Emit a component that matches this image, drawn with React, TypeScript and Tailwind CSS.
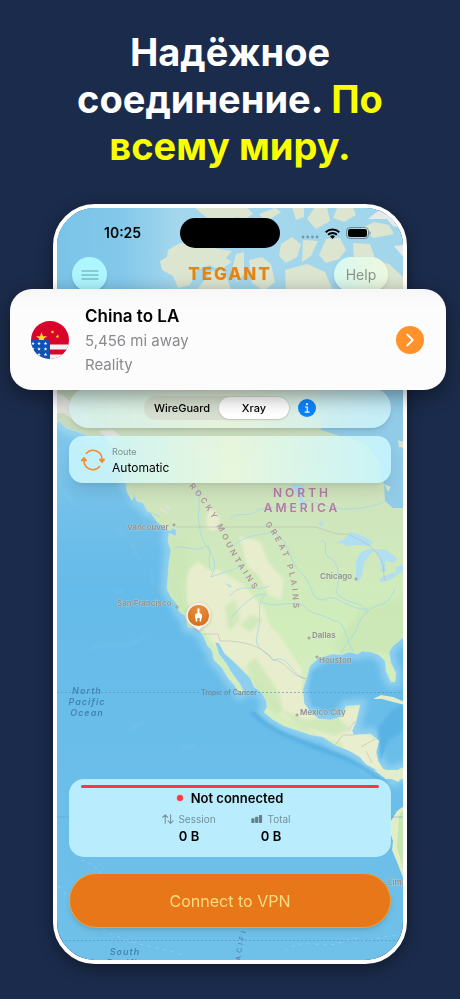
import React, { useState } from 'react';
import { ChevronRight } from 'lucide-react';

interface City {
  name: string;
  x: number;
  y: number;
  dot: [number, number];
}

const cities: City[] = [
  { name: 'Vancouver', x: 127, y: 530, dot: [174, 525] },
  { name: 'San Francisco', x: 117, y: 606, dot: [177, 607] },
  { name: 'Chicago', x: 320, y: 579, dot: [356, 579] },
  { name: 'Dallas', x: 312, y: 638, dot: [309, 638] },
  { name: 'Houston', x: 319, y: 663, dot: [317, 657] },
  { name: 'Mexico City', x: 300, y: 715, dot: [297, 715] },
  { name: 'Lima', x: 388, y: 885, dot: [420, 885] },
];

const MAINLAND =
  'M50 384L50 421 60 422 66 428 78 432 92 437 104 435 111 442 118 458 123 476 127 486 133 493 137 501 143 503 147 511 158 515 164 523 170 527 176 530 176 536 169 533 168 541 171 551 169 562 168 576 167 589 171 597 177 604 179 611 185 616 188 627 197 629 203 635 207 645 212 651 214 660 222 668 228 678 235 686 240 694 244 692 240 684 232 673 226 663 219 654 215 642 219 643 225 654 233 661 243 671 250 678 254 687 261 692 266 700 267 707 264 712 272 719 284 726 296 730 311 735 323 737 335 745 350 751 360 757 366 764 375 769 386 774 394 780 398 776 410 777 410 768 401 768 393 773 383 769 378 761 376 752 379 741 371 734 354 735 352 731 356 722 360 705 346 706 341 717 330 720 319 719 311 713 304 703 303 689 307 677 310 666 319 658 333 654 341 655 349 652 358 654 362 651 371 652 379 655 385 661 386 671 391 682 395 682 396 673 391 663 389 652 393 646 401 639 410 633 410 384Z';

const rivers = [
  'M174 548C185 544 198 554 205 546C216 547 204 560 212 571',
  'M197 486C203 506 195 515 200 526C198 546 224 555 211 577C225 572 235 570 245 564',
  'M230 519C240 510 248 519 258 510C278 504 293 512 307 500C332 509 352 514 387 501',
  'M231 548C244 534 260 536 272 532C293 541 287 563 303 574C315 590 310 600 325 600C334 591 348 611 368 609',
  'M321 541C331 540 321 551 328 557C342 562 339 584 336 592C347 607 362 599 367 612C356 622 360 628 348 642C344 649 340 653 341 655',
  'M231 618C244 604 252 594 266 594C254 605 264 610 257 635C253 649 267 651 273 660C291 654 289 676 307 679',
  'M262 602C276 609 289 600 303 605C311 616 322 613 334 621C345 620 345 638 353 651',
  'M230 596C241 581 256 593 269 586M367 612C378 601 388 609 395 588',
];

const borders = [
  'M176 527H316C330 532 337 535 347 534C362 540 373 547 377 554C387 565 382 574 385 581',
  'M203 634H218L220 641H230C250 643 263 647 273 660C286 660 289 676 307 679',
  'M348 731L354 722H370M335 745L343 735H354M361 747L375 739M372 763L366 751',
];

const TegantMap = () => (
  <svg
    viewBox="57 208 346 752"
    preserveAspectRatio="xMidYMid slice"
    className="absolute inset-0 h-full w-full"
    aria-hidden="true"
  >
    <defs>
      <linearGradient id="sea" x1="0" y1="0" x2="0" y2="1">
        <stop offset="0" stopColor="#83c8ea" />
        <stop offset="0.3" stopColor="#80c6ea" />
        <stop offset="0.5" stopColor="#65bbe9" />
        <stop offset="1" stopColor="#70c1e9" />
      </linearGradient>
      <linearGradient id="arctic" x1="0" y1="0" x2="1" y2="0">
        <stop offset="0" stopColor="#79c3e8" />
        <stop offset="0.2" stopColor="#83c8ea" />
        <stop offset="0.35" stopColor="#a4d7ed" />
        <stop offset="1" stopColor="#a2d6eb" />
      </linearGradient>
      <linearGradient id="land" x1="0" y1="0" x2="0" y2="1">
        <stop offset="0" stopColor="#c3d4bd" />
        <stop offset="0.3" stopColor="#cfe5bd" />
        <stop offset="0.6" stopColor="#d0edbb" />
        <stop offset="1" stopColor="#dcedc0" />
      </linearGradient>
      <radialGradient id="pin" cx="0.5" cy="0.2" r="0.8">
        <stop offset="0" stopColor="#e9903f" />
        <stop offset="1" stopColor="#d3701f" />
      </radialGradient>
      <filter id="haze" x="-20%" y="-20%" width="140%" height="140%">
        <feGaussianBlur stdDeviation="3" />
      </filter>
      <filter id="soft" x="-20%" y="-20%" width="140%" height="140%">
        <feGaussianBlur stdDeviation="1.5" />
      </filter>
      <clipPath id="landClip">
        <path d={MAINLAND} />
      </clipPath>
      <path id="rockies" d="M189 486C207 508 213 519 221 534C233 560 242 572 262 602" />
      <path id="plains" d="M265 524C277 540 286 558 290 578C293 590 293 602 294 622" />
      <path id="pacific" d="M240 968C241 950 244 935 251 918" />
    </defs>

    <rect x="50" y="200" width="360" height="770" fill="url(#sea)" />
    <rect x="50" y="200" width="360" height="190" fill="url(#arctic)" />
    <g fill="#dce5d0">
      <path d="M168 250L180 243 202 246 232 251 226 258 232 262 220 270 209 265 197 270 190 285 178 288 173 276 162 270 160 261 167 257Z" />
      <path d="M194 207L247 207 253 214 245 219 236 217 225 222 207 218Z" />
      <path d="M259 214L275 208 281 212 266 222Z" />
      <path d="M292 207H304V217L296 220Z" />
      <path d="M315 207L327 207 330 221 316 229 307 219Z" />
      <path d="M337 208L353 207 356 215 344 222 333 218Z" />
      <path d="M360 229L374 222 389 225 394 234 374 238Z" />
      <path d="M281 244L292 237 301 244 297 257 286 263 279 256Z" />
      <path d="M303 240L318 241 311 256 302 262Z" />
      <path d="M326 239L340 238 346 250 339 259 326 263 319 255Z" />
      <path d="M236 254L244 252 244 274 237 282 232 270Z" />
      <path d="M249 260L262 257 271 264 275 282 264 291 252 283Z" />
      <path d="M353 243L370 244 376 261 389 264 404 278V292H378L370 274 354 260Z" />
      <path d="M198 288L212 271 224 270 232 292H199Z" />
      <path d="M285 270L307 264 325 272 333 291H286Z" />
    </g>
    <path d="M368 219L383 207H410V231L393 226 387 219ZM394 246L404 245V258Z" fill="#e7e9e8" />

    <path d={MAINLAND} fill="none" stroke="#a8dcf3" strokeWidth="12" opacity="0.6" filter="url(#haze)" />
    <path d="M252 712C278 739 315 744 349 760C365 768 374 774 386 784" fill="none" stroke="#49a9df" strokeWidth="4" opacity="0.7" filter="url(#soft)" />
    <path d="M311 672C326 662 351 661 367 666L370 685 350 690 335 704 312 707 309 690Z" fill="#69bce8" filter="url(#soft)" />
    <path d="M378 728L392 710 410 701V727L389 740 380 762Z" fill="#58b2e3" filter="url(#soft)" />
    <path d={MAINLAND} fill="url(#land)" stroke="#bce5ef" strokeWidth="0.5" />

    <g clipPath="url(#landClip)">
      <g fill="#eceed0" opacity="0.85" filter="url(#soft)">
        <path d="M187 570L199 562 207 569 219 570 230 577 244 585 253 596 263 607 269 624 281 637 290 651 302 670 302 692 312 713 335 721 346 743 322 737 304 726 282 716 274 699 257 681 241 666 218 650 208 636 199 624 187 603Z" />
        <path d="M239 536L260 541 269 563 284 579 281 600 268 594 259 576 247 566Z" />
        <path d="M207 513L213 508 220 519 215 532 206 528Z" />
        <path d="M337 714L361 705 354 728 380 741 378 755 410 780 396 786 366 765 343 750Z" />
      </g>
      <g fill="#cbe7b6" opacity="0.8" filter="url(#soft)">
        <path d="M168 537L184 540 190 570 181 584 187 605 193 620 178 610 165 585Z" />
        <path d="M246 665L256 658 270 679 279 693 283 711 275 714 258 693Z" />
        <path d="M225 607L235 600 240 619 229 631ZM252 615L262 620 250 632 240 625Z" />
        <path d="M334 646L361 608 410 596 410 635 391 652 343 655Z" />
        <path d="M276 707L305 720 337 716 350 729 336 736 301 727Z" />
      </g>
      <g fill="#e2e1df" opacity="0.9">
        <path d="M50 390L64 396 76 407 89 415 95 427 78 424 64 413 50 414Z" />
        <path d="M99 431L113 430 123 438 112 444ZM158 505L164 510 171 514 163 512ZM165 504L172 509 168 510Z" />
      </g>
      <path d="M410 380H319L321 430 343 437 367 446 378 462 384 484 385 501 393 508 410 508Z" fill="#91cbe8" />
      <path d="M325 437L345 436 368 446 379 462 383 484 340 484Z" fill="#cfe3c4" />
      <path d="M398 440L404 442V448L399 447ZM384 484L391 487 388 492Z" fill="#d9e3c8" />
      <g fill="#b0dff2">
        <path d="M334 544L344 539 351 532 363 536 373 542 370 546 355 545 347 546 341 543Z" />
        <path d="M356 577L356 562 360 553 368 549 377 550 370 554 364 563 362 576 358 582Z" />
        <path d="M374 549L386 550 397 558 394 563 385 560 386 572 381 572 380 559Z" />
        <path d="M379 579L391 573 401 572 390 580 381 582Z" />
        <path d="M395 568L410 561V569L397 573Z" />
        <path d="M291 484L304 485 302 497 307 507 302 506 297 494 293 490ZM318 523L324 521 322 527Z" />
        <path d="M225 583L232 586 230 588Z" />
      </g>
      <g fill="none" stroke="#a7d7ea" strokeWidth="0.8">
        {rivers.map((d) => (
          <path key={d} d={d} />
        ))}
      </g>
      <g fill="none" stroke="#b9adb9" strokeWidth="0.7" opacity="0.7">
        {borders.map((d) => (
          <path key={d} d={d} />
        ))}
      </g>
    </g>

    <path d="M126 485L131 488 134 497 132 501 127 492ZM150 512L163 519 173 530 169 531 157 522Z" fill="#cfe5bc" />
    <path d="M373 699L381 695 393 697 405 702 405 705 393 702 382 699Z" fill="#e3edc8" />
    <path d="M374 770L383 771 392 776 396 773 408 776V779H386Z" fill="#e3edc8" />
    <path d="M378 770L404 770V776L398 782Z" fill="#e3edc8" />
    <path d="M404 806L397 811 391 821 390 832 393 841 392 850 397 862 404 880Z" fill="#e0edc5" />
    <path d="M399 816L404 808V872L397 848Z" fill="#c6e6b4" />

    <g stroke="#b9e3f4" strokeWidth="1" fill="none" opacity="0.3" filter="url(#soft)">
      <path d="M64 490L75 506M118 527L124 535M131 543L140 560M151 570L153 586M114 592L124 591" />
      <path d="M90 650C111 637 128 653 144 636M129 730L145 722M182 748L195 745" />
    </g>
    <g stroke="#b9e3f4" strokeWidth="1" fill="none" opacity="0.4">
      <path d="M58 886C77 902 71 919 103 929C137 949 163 946 184 956M285 951C306 934 327 955 352 937C370 947 383 932 402 936" strokeDasharray="3 5" />
      <path d="M82 860C98 864 99 877 119 885" strokeDasharray="3 4" />
    </g>
    <g stroke="#5494b8" strokeWidth="1" opacity="0.65">
      <path d="M57 692.500H199M258 692.500H404" strokeDasharray="2 2" />
      <path d="M57 817H404" opacity="0.6" />
      <path d="M57 940.500H404" strokeDasharray="2 2" />
    </g>

    <g className="font-[Inter,sans-serif]">
      <g fill="#b57aa6" className="text-[12px] font-semibold tracking-[3px]" textAnchor="middle">
        <text x="302" y="497">NORTH</text>
        <text x="302" y="512">AMERICA</text>
      </g>
      <g fill="#b0939b" className="text-[8px] font-semibold tracking-[3px]">
        <text>
          <textPath href="#rockies">ROCKY MOUNTAINS</textPath>
        </text>
        <text>
          <textPath href="#plains">GREAT PLAINS</textPath>
        </text>
      </g>
      <g fill="#4385b4" className="text-[9px] font-semibold italic tracking-[1px]" textAnchor="middle">
        <text x="87" y="694">North</text>
        <text x="87" y="705">Pacific</text>
        <text x="87" y="716">Ocean</text>
        <text x="125" y="955">South</text>
        <text x="125" y="966">Pacific</text>
      </g>
      <text fill="#4f88ad" className="text-[7px] font-medium tracking-[3px]">
        <textPath href="#pacific">PACIFIC</textPath>
      </text>
      <text x="201" y="695" fill="#74868c" className="text-[7px] font-medium">
        Tropic of Cancer
      </text>
      <g className="text-[8px] font-semibold" fill="#8f9192">
        {cities.map(({ name, x, y, dot }) => (
          <g key={name}>
            <circle cx={dot[0]} cy={dot[1]} r="1.1" fill="#d5d3d0" stroke="#8f8a8c" strokeWidth="0.8" />
            <text x={x} y={y} stroke="#e5ead8" strokeWidth="1" strokeOpacity="0.4" paintOrder="stroke">
              {name}
            </text>
          </g>
        ))}
      </g>
    </g>

    <path d="M198.500 632L193 627.500A12.500 12.500 0 1 1 204 627.500Z" fill="#7a6a60" opacity="0.3" filter="url(#soft)" />
    <path d="M198.500 630.500L194.500 627A12.300 12.300 0 1 1 202.500 627Z" fill="#f6f2ee" />
    <circle cx="198.500" cy="615.500" r="10.600" fill="url(#pin)" />
    <path d="M197.500 608.500H199.500V613L202 614.500V618.500H201.200V621.500H199.700V618H197.300V621.500H195.800V618.500H195V614.500L197.500 613Z" fill="#fff" />
  </svg>
);

const FlagIcon = () => (
  <svg viewBox="0 0 38 38" className="h-[38px] w-[38px] shrink-0" role="img" aria-label="China and United States">
    <defs>
      <clipPath id="flagClip">
        <circle cx="19" cy="19" r="19" />
      </clipPath>
      <path id="star" d="M0-1L.26-.31 .95-.31 .38.12 .59.81 0 .4-.59.81-.38.12-.95-.31-.26-.31Z" />
    </defs>
    <g clipPath="url(#flagClip)">
      <rect width="38" height="38" fill="#d9042b" />
      <g fill="#ffda2c">
        <use href="#star" transform="translate(10.500 17) scale(5.800)" />
        <use href="#star" transform="translate(21.500 11) scale(2.100) rotate(20)" />
        <use href="#star" transform="translate(26.500 15.500) scale(2.100) rotate(-10)" />
      </g>
      <rect y="23.500" width="38" height="5" fill="#f4f1f2" />
      <rect y="33.500" width="38" height="5" fill="#f4f1f2" />
      <rect y="19" width="19" height="19" fill="#0b52b4" />
      <g fill="#fff">
        {[22.5, 28, 33.5].map((y) =>
          [2, 8, 14.5].map((x) => (
            <use key={`${x}-${y}`} href="#star" transform={`translate(${x} ${y}) scale(2)`} />
          ))
        )}
      </g>
    </g>
  </svg>
);

const StatusBar = () => (
  <div className="grid grid-cols-[1fr_100px_1fr] items-center pt-2.5">
    <span className="pl-[47px] text-sm font-semibold text-black">10:25</span>
    <div className="h-[30px] rounded-full bg-black" />
    <div className="flex items-center justify-end gap-1.5 pr-8">
      <svg viewBox="0 0 18 14" className="h-3.5 w-[18px]" aria-hidden="true">
        {[2, 6.7, 11.4, 16].map((x) => (
          <circle key={x} cx={x} cy="11" r="1.4" fill="#719bad" />
        ))}
      </svg>
      <svg viewBox="0 0 15 11" className="h-[11px] w-[15px]" aria-hidden="true">
        <g fill="none" stroke="#000" strokeWidth="1.900">
          <path d="M.7 4.200A9.800 9.800 0 0 1 14.300 4.200" />
          <path d="M3.100 6.800A6.300 6.300 0 0 1 11.900 6.800" />
        </g>
        <path d="M7.500 11L5.100 8.500A3.500 3.500 0 0 1 9.900 8.500Z" />
      </svg>
      <svg viewBox="0 0 25 12" className="h-3 w-[25px]" aria-hidden="true">
        <rect x=".5" y=".5" width="22" height="11" rx="3.600" fill="none" stroke="#6f8c95" />
        <rect x="2" y="2" width="19" height="8" rx="2.300" />
        <path d="M23.500 4V8Q24.700 7.300 24.700 6T23.500 4Z" fill="#6f8c95" />
      </svg>
    </div>
  </div>
);

const protocols = ['WireGuard', 'Xray'];

const ProtocolBar = () => {
  const [protocol, setProtocol] = useState('Xray');

  return (
    <div className="-mt-0.5 flex h-10 items-center justify-center gap-2 rounded-full bg-gradient-to-r from-[#d5f1ee]/90 via-[#ebf6df]/85 to-[#c8f1fb]/90 shadow-md">
      <div className="grid h-6 grid-cols-[74px_70px] rounded-full bg-[#d6dfd0] p-px">
        {protocols.map((name) => (
          <button
            key={name}
            type="button"
            aria-pressed={protocol === name}
            onClick={() => setProtocol(name)}
            className={
              protocol === name
                ? 'rounded-full bg-white text-[11px] font-medium text-black shadow-sm'
                : 'rounded-full text-[11px] font-medium text-black'
            }
          >
            {name}
          </button>
        ))}
      </div>
      <button
        type="button"
        aria-label="Protocol info"
        className="flex h-[18px] w-[18px] items-center justify-center rounded-full bg-[#0a84ff]"
      >
        <svg viewBox="0 0 18 18" className="h-full w-full" fill="none" stroke="#fff" strokeWidth="1.200">
          <circle cx="9" cy="5.200" r="1.100" fill="#fff" stroke="none" />
          <path d="M7 8H9.300V13M6.700 13.200H11.600" />
        </svg>
      </button>
    </div>
  );
};

const RouteCard = () => (
  <button
    type="button"
    className="mt-2 flex h-[47px] w-full items-center gap-2 rounded-[14px] bg-gradient-to-r from-[#c7f5fe]/90 via-[#ecfae2]/85 to-[#c7f5fe]/90 px-3 text-left shadow-lg"
  >
    <svg viewBox="0 0 24 24" className="h-6 w-6" fill="none" stroke="#f8892c" strokeWidth="1.500" strokeLinecap="round">
      <path d="M5.300 5.400A9 9 0 0 1 21 11.500" />
      <path d="M18.700 18.600A9 9 0 0 1 3 12.500" />
      <path d="M18.700 11.500H23.300L21 14.300ZM.7 12.500H5.300L3 9.700Z" fill="#f8892c" strokeLinejoin="round" />
    </svg>
    <span className="-ml-px">
      <span className="block text-[9px] leading-4 text-[#7f8e8b]">Route</span>
      <span className="block text-xs leading-4 text-black">Automatic</span>
    </span>
  </button>
);

const SessionIcon = () => (
  <svg viewBox="0 0 12 10" className="h-2.5 w-3" fill="none" stroke="#77959e" strokeWidth="1.100" strokeLinecap="round" strokeLinejoin="round">
    <path d="M3.200 9.300V.8M.7 3.300L3.200.8 5.700 3.300M8.600.8V9.300M6.100 6.800L8.600 9.300 11.100 6.800" />
  </svg>
);

const TotalIcon = () => (
  <svg viewBox="0 0 12 10" className="h-2.5 w-3" fill="#64808b">
    <rect x=".3" y="4.300" width="3.200" height="4.700" rx=".8" />
    <rect x="4.100" y="2.700" width="3.200" height="6.300" rx=".8" />
    <rect x="7.900" y="1" width="3.200" height="8" rx=".8" />
  </svg>
);

const stats = [
  { label: 'Session', value: '0 B', icon: <SessionIcon /> },
  { label: 'Total', value: '0 B', icon: <TotalIcon /> },
];

const StatusCard = () => (
  <section className="h-[78px] rounded-[15px] bg-[#beeffe]/95 px-3 pt-1.5">
    <div className="h-[3px] rounded-full bg-[#fa383e]" />
    <div className="mt-px flex items-center justify-center gap-2">
      <span className="h-1.5 w-1.5 rounded-full bg-[#fa383e] shadow-[0_0_2px_#fa8a94]" />
      <span className="text-[13px] leading-[18px] font-semibold text-black">Not connected</span>
    </div>
    <dl className="mx-auto mt-1 grid w-[164px] grid-cols-2 text-center">
      {stats.map(({ label, value, icon }) => (
        <div key={label}>
          <dt className="flex items-center justify-center gap-1 text-[10px] leading-4 text-[#72909a]">
            {icon}
            {label}
          </dt>
          <dd className="text-[13px] leading-[18px] font-semibold text-black">{value}</dd>
        </div>
      ))}
    </dl>
  </section>
);

const LocationCard = () => (
  <button
    type="button"
    className="relative -mx-[47px] -mt-[3px] flex h-[101px] w-[calc(100%+90px)] items-center rounded-[22px] bg-gradient-to-b from-[#f7f7f7] to-[#fcfcfc] to-20% pr-[22px] pl-[21px] text-left shadow-[0_6px_20px_rgba(0,0,0,0.4)]"
  >
    <FlagIcon />
    <span className="ml-4 flex-1">
      <span className="block text-[17px] leading-[26px] font-semibold text-black">China to LA</span>
      <span className="block text-[15px] leading-6 text-[#8a8a8e]">5,456 mi away</span>
      <span className="block text-[15px] leading-6 text-[#8a8a8e]">Reality</span>
    </span>
    <span className="flex h-7 w-7 items-center justify-center rounded-full bg-[#ff922b] text-white">
      <ChevronRight size={22} strokeWidth={2} />
    </span>
  </button>
);

export default function App() {
  return (
    <main className="min-h-screen bg-[#1b2b4b] px-[53px] pt-[29px] pb-[35px] font-[Inter,'Noto_Sans',sans-serif]">
      <h1 className="-mx-10 text-center text-[38px] leading-[47px] font-bold text-white">
        Надёжное
        <br />
        соединение. <span className="text-[#faff00]">По</span>
        <br />
        <span className="text-[#faff00]">всему миру.</span>
      </h1>

      <div className="relative mt-[34px] rounded-[42px] border-4 border-white shadow-[0_4px_16px_rgba(0,0,0,0.4)]">
        <div className="absolute inset-0 overflow-hidden rounded-[38px]">
          <TegantMap />
        </div>

        <div className="relative">
          <StatusBar />
          <header className="mt-[9px] flex items-center justify-between px-[15px]">
            <button
              type="button"
              aria-label="Menu"
              className="flex h-[35px] w-[35px] items-center justify-center rounded-full bg-[#aef6ff] shadow-md"
            >
              <svg viewBox="0 0 18 10" className="h-2.5 w-[18px]" stroke="#62a0aa" strokeWidth="1.200">
                <path d="M.5 1H17.500M.5 5H17.500M.5 9H17.500" />
              </svg>
            </button>
            <span className="pl-[19px] text-[17px] font-extrabold tracking-[2px] text-[#e6850f]">TEGANT</span>
            <button
              type="button"
              className="h-[35px] w-[54px] rounded-full bg-gradient-to-r from-[#d8f8ef] to-[#edf8df] text-sm text-[#8b9689] shadow-md"
            >
              Help
            </button>
          </header>

          <LocationCard />

          <div className="px-3 pb-8">
            <ProtocolBar />
            <RouteCard />
            <div className="h-[296px]" />
            <StatusCard />
            <button
              type="button"
              className="mt-4 h-[55px] w-full rounded-full border border-[#eda33a] bg-[#e87719] text-base text-[#ffdc82] shadow-md"
            >
              Connect to VPN
            </button>
          </div>
        </div>
      </div>
    </main>
  );
}
